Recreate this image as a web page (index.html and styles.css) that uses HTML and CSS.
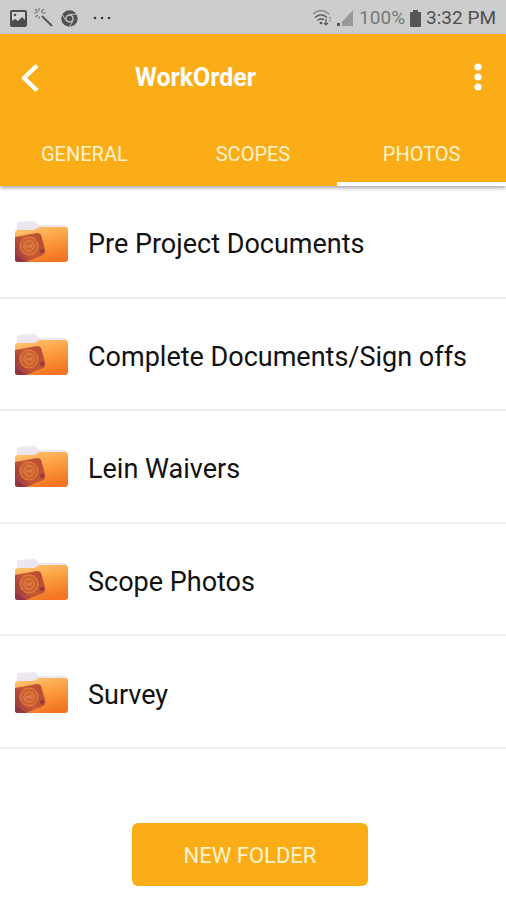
FILE: index.html
```html
<!DOCTYPE html>
<html lang="en">
<head>
<meta charset="utf-8">
<meta name="viewport" content="width=device-width, initial-scale=1">
<title>WorkOrder</title>
<link rel="stylesheet" href="styles.css">
</head>
<body>
<svg class="defs" width="0" height="0" aria-hidden="true">
  <defs>
    <linearGradient id="front" x1="0.2" y1="0" x2="0.6" y2="1">
      <stop offset="0" stop-color="#ffc470"/>
      <stop offset="0.5" stop-color="#fb9c3f"/>
      <stop offset="1" stop-color="#f37422"/>
    </linearGradient>
    <linearGradient id="lens" x1="0" y1="0.8" x2="1" y2="0.3">
      <stop offset="0" stop-color="#9c3a40"/>
      <stop offset="0.5" stop-color="#c85a33"/>
      <stop offset="1" stop-color="#b84c34"/>
    </linearGradient>
    <symbol id="folder" viewBox="0 0 56 42">
      <path d="M4 1L20 0Q22 0 23 2L25 4H50Q53 4 53 7V18H2L3 3Q3 1 4 1Z" fill="#ece6f0"/>
      <path d="M1 12Q1 9 4 9H20L25 6H51Q54 6 54 9V38Q54 41 51 41H4Q1 41 1 38Z" fill="url(#front)"/>
      <path d="M1 16L23 12Q26 12 27 14L31 28Q32 32 29 34L12 41H4Q1 41 1 38Z" fill="url(#lens)"/>
      <path d="M1 33L12 41H4Q1 41 1 38Z" fill="#8f3444"/>
      <circle cx="15" cy="25" r="9" fill="#d0622f" stroke="#df8450" stroke-width="1"/>
      <circle cx="15" cy="25" r="5" fill="#d0622f" stroke="#e08a55" stroke-width="1"/>
      <path d="M13 27V24L15 26L17 23V27" fill="none" stroke="#df8a5c" stroke-width="1"/>
      <circle cx="28" cy="30" r="2" fill="#913a3d"/>
    </symbol>
  </defs>
</svg>
<div class="screen">
  <div class="status">
    <div class="status-group notices">
      <svg width="17" height="17" viewBox="0 0 17 17" aria-hidden="true">
        <rect x="1" y="1" width="15" height="15" rx="1" fill="#d3d3d3" stroke="#4d4d4d" stroke-width="2"/>
        <path d="M2 15V11L5 9L8 11L12 7L15 10V15Z" fill="#4d4d4d"/>
        <circle cx="5" cy="5" r="1.3" fill="#4d4d4d"/>
      </svg>
      <svg width="20" height="20" viewBox="0 0 20 20" aria-hidden="true">
        <path d="M8 8L18 18" stroke="#5c5c5c" stroke-width="2.2"/>
        <path d="M5 0V3M0 5H3M1 1L4 4M10 1L7 4M1 9L4 7M5 8V11M8 5H12" stroke="#777" stroke-width="1.1"/>
      </svg>
      <svg width="17" height="17" viewBox="0 0 17 17" aria-hidden="true">
        <circle cx="8.5" cy="8.5" r="8.2" fill="#505050"/>
        <path d="M8.5 4.3H16M4.9 10.6L1.3 4.5M12.1 10.6L8.5 16.8" stroke="#bdbdbd" stroke-width="1"/>
        <circle cx="8.5" cy="8.5" r="3.5" fill="#505050" stroke="#c4c4c4" stroke-width="1.4"/>
      </svg>
      <svg class="more-notices" width="18" height="4" viewBox="0 0 18 4" aria-hidden="true">
        <g fill="#3c3c3c"><circle cx="2" cy="2" r="1.3"/><circle cx="9" cy="2" r="1.3"/><circle cx="16" cy="2" r="1.3"/></g>
      </svg>
    </div>
    <div class="status-group readings">
      <svg width="20" height="18" viewBox="0 0 20 18" aria-hidden="true">
        <g fill="none" stroke="#606060" stroke-width="1.6"><path d="M1 5Q9 -2 17 5" stroke="#858585"/><path d="M3 8.5Q9 3 15 8.5"/><path d="M5.5 11.5Q9 8.5 12 11"/></g>
        <circle cx="9" cy="14" r="1.3" fill="#555"/>
        <path d="M14 10V16M12 14L14 16L16 14" fill="none" stroke="#555" stroke-width="1.2"/>
        <path d="M18 13V8M17 9L18 8L19 9" fill="none" stroke="#999" stroke-width="1"/>
      </svg>
      <svg width="17" height="18" viewBox="0 0 17 18" aria-hidden="true">
        <path d="M16 1V17H5V13Z" fill="#999"/><rect y="14" width="3" height="3" fill="#555"/>
      </svg>
      <span class="charge">100%</span>
      <svg width="11" height="17" viewBox="0 0 11 17" aria-hidden="true">
        <path d="M3 0H8V2H10Q11 2 11 3V16Q11 17 10 17H1Q0 17 0 16V3Q0 2 1 2H3Z" fill="#555"/>
      </svg>
      <span>3:32 PM</span>
    </div>
  </div>
  <header class="header">
    <div class="bar">
      <button class="icon-button" type="button" aria-label="Back">
        <svg width="20" height="32" viewBox="0 0 20 32"><path d="M17 3.500L4 16L17 28.500" fill="none" stroke="#fff" stroke-width="4.500" stroke-linejoin="round"/></svg>
      </button>
      <h1 class="title">WorkOrder</h1>
      <button class="icon-button" type="button" aria-label="More options">
        <svg width="8" height="30" viewBox="0 0 8 30"><g fill="#fff"><circle cx="4" cy="4" r="3.6"/><circle cx="4" cy="14" r="3.6"/><circle cx="4" cy="24" r="3.6"/></g></svg>
      </button>
    </div>
    <nav class="tabs">
      <a class="tab" href="#general">GENERAL</a>
      <a class="tab" href="#scopes">SCOPES</a>
      <a class="tab active" href="#photos" aria-current="page">PHOTOS</a>
    </nav>
  </header>
  <main class="content">
    <ul class="folders">
      <li><a class="folder" href="#pre-project"><svg class="folder-icon" aria-hidden="true"><use href="#folder"/></svg><span class="folder-name">Pre Project Documents</span></a></li>
      <li><a class="folder" href="#complete"><svg class="folder-icon" aria-hidden="true"><use href="#folder"/></svg><span class="folder-name">Complete Documents/Sign offs</span></a></li>
      <li><a class="folder" href="#waivers"><svg class="folder-icon" aria-hidden="true"><use href="#folder"/></svg><span class="folder-name">Lein Waivers</span></a></li>
      <li><a class="folder" href="#scope-photos"><svg class="folder-icon" aria-hidden="true"><use href="#folder"/></svg><span class="folder-name">Scope Photos</span></a></li>
      <li><a class="folder" href="#survey"><svg class="folder-icon" aria-hidden="true"><use href="#folder"/></svg><span class="folder-name">Survey</span></a></li>
    </ul>
    <div class="actions"><button class="new-folder" type="button">NEW FOLDER</button></div>
  </main>
</div>
</body>
</html>
```
FILE: styles.css
```css
* {
  box-sizing: border-box;
}

body {
  margin: 0;
  background: #fff;
  color: #111;
  font-family: Roboto, "Liberation Sans", sans-serif;
}

svg {
  display: block;
  flex: none;
}

.defs {
  position: absolute;
}

.screen {
  display: flex;
  flex-direction: column;
  min-height: 100vh;
}

.status {
  display: flex;
  justify-content: space-between;
  align-items: center;
  height: 34px;
  padding: 2px 10px 0;
  background: #cdcdcd;
  color: #505050;
  font-size: 19px;
  line-height: 24px;
}

.status-group {
  display: flex;
  align-items: center;
}

.notices {
  gap: 7px;
}

.more-notices {
  margin-left: 8px;
}

.readings {
  gap: 5px;
}

.charge {
  color: #777;
}

.header {
  background: #fbad18;
  color: #fff;
  box-shadow: 0 2px 4px rgba(0, 0, 0, 0.35);
}

.bar {
  display: grid;
  grid-template-columns: 60px 1fr 56px;
  align-items: center;
  height: 88px;
}

.icon-button {
  display: flex;
  align-items: center;
  justify-content: center;
  height: 60px;
  padding: 0;
  border: 0;
  background: none;
}

.title {
  margin: 0;
  padding-left: 75px;
  font-size: 25px;
  line-height: 32px;
  font-weight: 700;
}

.tabs {
  display: grid;
  grid-template-columns: repeat(3, 1fr);
}

.tab {
  height: 64px;
  padding-top: 20px;
  border-bottom: 4px solid transparent;
  color: #fff3ce;
  font-size: 20px;
  line-height: 24px;
  text-align: center;
  text-decoration: none;
}

.tab.active {
  border-bottom-color: #fff;
}

.content {
  display: flex;
  flex: 1;
  flex-direction: column;
}

.folders {
  display: grid;
  flex: 1;
  grid-auto-rows: 1fr;
  margin: 0;
  padding: 0;
  list-style: none;
}

.folder {
  display: flex;
  align-items: center;
  gap: 18px;
  height: 100%;
  padding: 2px 14px 0;
  border-bottom: 2px solid #eee;
  color: #111;
  font-size: 27px;
  line-height: 32px;
  text-decoration: none;
}

.folder-icon {
  width: 56px;
  height: 42px;
}

.folder-name {
  padding-top: 4px;
}

.actions {
  display: flex;
  justify-content: center;
  padding: 74px 26px 14px 20px;
}

.new-folder {
  min-width: 236px;
  height: 63px;
  padding: 2px 20px 0;
  border: 0;
  border-radius: 6px;
  background: #fbad18;
  color: #fff3ce;
  font-family: inherit;
  font-size: 22px;
  line-height: 28px;
}
```
